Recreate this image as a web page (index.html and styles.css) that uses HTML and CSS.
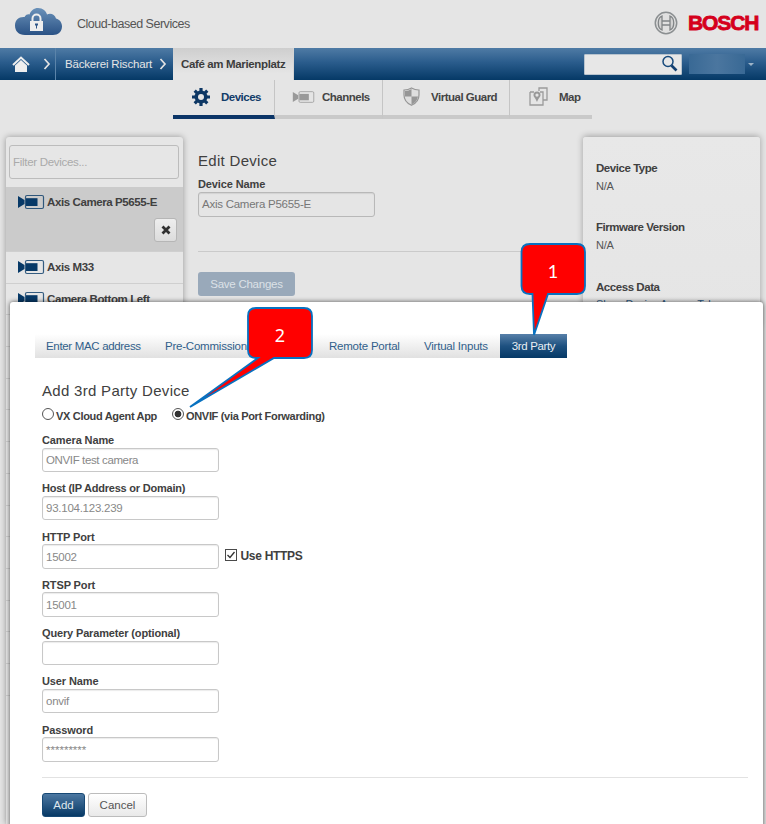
FILE: index.html
```html
<!DOCTYPE html>
<html lang="en">
<head>
<meta charset="utf-8">
<title>Cloud-based Services</title>
<link rel="stylesheet" href="styles.css">
</head>
<body>
<svg class="defs" width="0" height="0">
  <defs>
    <linearGradient id="cloud" x1="0" y1="0" x2="0" y2="1"><stop offset="0" stop-color="#6a91b9"/><stop offset="1" stop-color="#2a5285"/></linearGradient>
    <symbol id="camera" viewBox="0 0 28 16"><path d="M1 2l6.500 4v4L1 14z" fill="currentColor"/><rect x="8.500" y="1.500" width="18" height="13" rx="1.500" fill="none" stroke="currentColor" stroke-opacity=".8" stroke-width="1.200"/><rect x="9" y="4.200" width="11.500" height="7.800" fill="currentColor"/></symbol>
  </defs>
</svg>
<header class="top">
  <svg class="cloud" width="49" height="30" viewBox="0 0 49 30">
    <path d="M11 28C4.500 28 1 24 1 18.500C1 13 5 9.500 10.500 10C12 7.500 14 7 15.500 7.500C17 3.500 20 1 24 1C29 1 32 4 33 7.500C36 5.500 41 7 42 11.500C46 12.500 48 16 48 19.500C48 24.500 44 28 39 28Z" fill="url(#cloud)"/>
    <path d="M18.500 15v-3.500a4 4 0 0 1 8 0V15" fill="none" stroke="#eee" stroke-width="2"/><rect x="16" y="14" width="13" height="10" fill="#eee"/><path d="M21 16.500h3v2h-1v3h-1v-3h-1z" fill="#2f5688"/>
  </svg>
  <span class="product">Cloud-based Services</span>
  <svg class="armature" width="24" height="24" viewBox="0 0 24 24"><circle cx="12" cy="12" r="10.700" fill="#e0e0e0" stroke="#8b8f91" stroke-width="1.500"/><path d="M8 5v14C3 17 3 7 8 5zM16 5v14c5-2 5-12 0-14z" fill="#d2d2d2" stroke="#808486" stroke-width="1.300"/><path d="M8 10h8M8 14h8" stroke="#808486" stroke-width="1.400"/></svg>
  <span class="brand">BOSCH</span>
</header>
<nav class="crumbs">
  <div class="crumb home"><svg width="18" height="18" viewBox="0 0 18 18"><path d="M1 10L9 2.500 17 10" fill="none" stroke="#eee" stroke-width="2"/><path d="M3 10.500L9 5l6 5.500V17H3z" fill="#eee"/></svg><svg width="8" height="12" viewBox="0 0 8 12"><path d="M1.500 1L6 6l-4.500 5" fill="none" stroke="#e4e4e4" stroke-width="1.700"/></svg></div>
  <div class="crumb parent"><span>Bäckerei Rischart</span><svg width="8" height="12" viewBox="0 0 8 12"><path d="M1.500 1L6 6l-4.500 5" fill="none" stroke="#e4e4e4" stroke-width="1.700"/></svg></div>
  <div class="crumb current">Café am Marienplatz</div>
  <div class="search"><svg width="18" height="18" viewBox="0 0 18 18"><circle cx="7" cy="6.500" r="5" fill="none" stroke="#174a7c" stroke-width="1.500"/><path d="M10.500 10.500l5 5" stroke="#123f70" stroke-width="2.700"/></svg></div>
  <div class="account"></div><span class="caret"></span>
</nav>
<nav class="sections">
  <a class="sec active devices"><svg width="20" height="20" viewBox="0 0 20 20"><g stroke="#0d3764" stroke-width="3.200"><path d="M10 1v18M1 10h18M3.700 3.700l12.600 12.600M16.300 3.700L3.700 16.300"/></g><circle cx="10" cy="10" r="6.500" fill="#0d3764"/><circle cx="10" cy="10" r="3" fill="#e5e5e5"/></svg><span>Devices</span></a>
  <a class="sec channels"><svg width="23" height="14"><use href="#camera"/></svg><span>Channels</span></a>
  <a class="sec guard"><svg width="17" height="19" viewBox="0 0 17 19"><path d="M8.500 1C6 2.500 4 3 1 3v5c0 5 3.500 8.500 7.500 10.300C12.500 16.500 16 13 16 8V3c-3 0-5-.5-7.500-2z" fill="#dedede" stroke="#969696" stroke-width="1.200"/><path d="M8.500 2v7.500H2V4c3 0 4.500-.8 6.500-2zM8.500 9.500H15c-.6 4-3.200 6.500-6.500 8z" fill="#969696"/></svg><span>Virtual Guard</span></a>
  <a class="sec map"><svg width="19" height="19" viewBox="0 0 19 19"><path d="M10 4V1h8v12h-4M1 5h4m6 0h3v13H1V5" fill="none" stroke="#9b9b9b" stroke-width="1.300"/><path d="M8 4.500a3.500 3.500 0 0 1 3.500 3.500c0 2-2 3-3.500 7-1.500-4-3.500-5-3.500-7A3.500 3.500 0 0 1 8 4.500zm0 2a1.600 1.600 0 1 0 0 3.200 1.600 1.600 0 0 0 0-3.200z" fill="#999" fill-rule="evenodd"/></svg><span>Map</span></a>
</nav>
<main class="work">
  <aside class="list">
    <div class="filter">Filter Devices...</div>
    <div class="row selected"><svg width="28" height="16"><use href="#camera"/></svg><span>Axis Camera P5655-E</span><button class="remove"><svg width="10" height="10" viewBox="0 0 10 10"><path d="M1.500 1.500l7 7M8.500 1.500l-7 7" stroke="#303030" stroke-width="2.800"/></svg></button></div>
    <div class="row r2"><svg width="28" height="16"><use href="#camera"/></svg><span>Axis M33</span></div>
    <div class="row r3"><svg width="28" height="16"><use href="#camera"/></svg><span>Camera Bottom Left</span></div>
    <div class="row"></div><div class="row"></div><div class="row"></div><div class="row"></div><div class="row"></div><div class="row"></div><div class="row"></div><div class="row"></div><div class="row"></div><div class="row"></div><div class="row"></div><div class="row"></div>
  </aside>
  <section class="editor">
    <h2>Edit Device</h2>
    <label>Device Name</label>
    <div class="input name">Axis Camera P5655-E</div>
    <hr>
    <button class="save">Save Changes</button>
  </section>
  <aside class="info">
    <dl><dt class="i1">Device Type</dt><dd>N/A</dd><dt class="i2">Firmware Version</dt><dd>N/A</dd><dt class="i3">Access Data</dt><dd class="link">Show Device Access Token</dd></dl>
  </aside>
</main>
<div class="modal">
  <nav class="tabs"><a class="t1">Enter MAC address</a><a class="t2">Pre-Commissioning</a><a class="t3">Remote Portal</a><a class="t4">Virtual Inputs</a><a class="on">3rd Party</a></nav>
  <form>
    <h2>Add 3rd Party Device</h2>
    <div class="radios"><i class="radio"></i><span class="app">VX Cloud Agent App</span><i class="radio checked"></i><span class="onvif">ONVIF (via Port Forwarding)</span></div>
    <div class="field"><label class="l1">Camera Name</label><div class="input v1">ONVIF test camera</div></div>
    <div class="field"><label class="l2">Host (IP Address or Domain)</label><div class="input v2">93.104.123.239</div></div>
    <div class="field"><label>HTTP Port</label><div class="line"><div class="input">15002</div><svg width="12" height="12" viewBox="0 0 12 12"><rect x=".5" y=".5" width="11" height="11" fill="#fff" stroke="#4a4a4a"/><path d="M2.500 6l2.500 2.500 4.500-5.500" fill="none" stroke="#333" stroke-width="1.300"/></svg><span class="https">Use HTTPS</span></div></div>
    <div class="field"><label>RTSP Port</label><div class="input">15001</div></div>
    <div class="field"><label class="l5">Query Parameter (optional)</label><div class="input"></div></div>
    <div class="field"><label>User Name</label><div class="input">onvif</div></div>
    <div class="field"><label class="l7">Password</label><div class="input stars">*********</div></div>
    <hr>
    <div class="actions"><button type="button" class="add">Add</button><button type="button" class="cancel">Cancel</button></div>
  </form>
</div>
<svg class="callouts" width="766" height="824" viewBox="0 0 766 824">
  <g fill="#f00" stroke="#0871c0" stroke-width="1.800" stroke-linejoin="miter">
    <path d="M530 244H577Q585 244 585 252V286Q585 294 577 294H548L534 335L532.500 294H530Q521.500 294 521.500 286V252Q521.500 244 530 244Z"/>
    <path d="M256 308H304Q312 308 312 316V350Q312 358 304 358H274L190 407L258 358H256Q248 358 248 350V316Q248 308 256 308Z"/>
  </g>
  <text class="num one" x="553" y="277.500" text-anchor="middle">1</text>
  <text class="num" x="280" y="342" text-anchor="middle">2</text>
</svg>
</body>
</html>
```
FILE: styles.css
```css
* { box-sizing: border-box; }
body { margin: 0; width: 766px; height: 824px; position: relative; overflow: hidden; background: #e5e5e5; font: 12px/16px "Liberation Sans", Arial, sans-serif; color: #404040; }
.defs, .callouts, .modal { position: absolute; }
svg { display: block; flex: none; }
button { font: inherit; padding: 0; }
h2 { margin: 0; font-size: 15px; font-weight: normal; line-height: 18px; letter-spacing: .3px; }
label { display: block; font-weight: bold; font-size: 11px; line-height: 14px; letter-spacing: -.120px; white-space: nowrap; }
hr { border: 0; margin: 0; }
.top { height: 48px; display: flex; align-items: center; padding: 0 8px 0 14px; }
.cloud { margin-bottom: 4px; }
.product { margin-left: 14px; font-size: 12.500px; letter-spacing: -.480px; color: #555; flex: 1; }
.armature { margin: 0 10px 2px 0; }
.brand { font: bold 21px/24px "Liberation Sans", Arial, sans-serif; color: #d5001c; -webkit-text-stroke: .8px #d5001c; width: 70px; letter-spacing: -1.100px; margin-bottom: 2px; }
.crumbs { height: 32px; display: flex; align-items: center; background: linear-gradient(#4f7ba5, #2a5c8c 45%, #053966); color: #e5e5e5; }
.crumb { height: 32px; display: flex; align-items: center; white-space: nowrap; }
.home { width: 56px; padding-left: 12px; gap: 13px; border-right: 1px solid #5b84aa; }
.parent { width: 117px; padding-left: 9px; gap: 6px; }
.parent span { width: 88px; font-size: 11.500px; letter-spacing: -.180px; }
.current { width: 121px; padding-left: 8px; background: linear-gradient(#cecece, #e5e5e5 80%); border-right: 1px solid #d4d4d4; color: #3d3d3d; font-weight: bold; font-size: 11.500px; letter-spacing: -.360px; }
.search { margin-left: 290px; width: 98px; height: 21px; background: #e7e7e7; border: 1px solid #b7c3ce; border-radius: 1px; display: flex; justify-content: flex-end; align-items: center; padding-right: 2px; }
.account { margin-left: 7px; width: 56px; height: 20px; background: linear-gradient(90deg, #396995, #4b769f 50%, #396995); }
.caret { margin-left: 3px; border: 3px solid transparent; border-top-color: #9db4c8; border-bottom: 0; }
.sections { height: 39px; display: flex; margin-left: 173px; }
.sec { display: flex; align-items: center; height: 39px; border-bottom: 4px solid #c9c9c9; border-right: 1px solid #c5c5c5; font-weight: bold; font-size: 11.500px; color: #444; white-space: nowrap; padding-bottom: 2px; letter-spacing: -.500px; }
.devices { width: 102px; padding-left: 18px; gap: 10px; border-bottom-color: #0b3567; color: #123c69; }
.channels { width: 108px; padding-left: 17px; gap: 7px; }
.channels svg { color: #999; }
.guard { width: 127px; padding-left: 20px; gap: 11px; }
.map { width: 82px; padding-left: 19px; gap: 11px; border-right: 0; }
.work { display: flex; padding: 18px 6px 0; height: 705px; }
.list { width: 177px; height: 687px; border-radius: 3px 3px 0 0; background: #e6e6e6; box-shadow: 0 0 6px rgba(0,0,0,.35); padding-top: 8px; overflow: hidden; }
.filter { margin: 0 4px 8px 3px; height: 34px; border: 1px solid #bcbcbc; border-radius: 3px; padding: 8px 3px; font-size: 11.500px; letter-spacing: -.300px; color: #aaa; }
.row { height: 31.700px; border-bottom: 1px solid #cfcfcf; display: flex; align-items: flex-start; padding: 7px 0 0 11px; gap: 2px; font-size: 11.500px; letter-spacing: -.400px; font-weight: bold; position: relative; white-space: nowrap; }
.row > svg { color: #073967; }
.selected { height: 65px; background: #cbcbcb; }
.remove { position: absolute; right: 6px; bottom: 9px; width: 23px; height: 24px; border: 1px solid #b6b6b6; border-radius: 3px; background: linear-gradient(#eee, #dcdcdc); display: grid; place-items: center; }
.editor { width: 354px; margin-left: 15px; padding-top: 15px; }
.editor label { margin-top: 7px; }
.input { width: 176.500px; height: 24.500px; border: 1px solid #c8c8c8; border-radius: 3px; padding: 4px 3px 0; line-height: 15px; font-size: 11.500px; letter-spacing: -.250px; color: #888; background: #fff; box-shadow: inset 0 1px 1px rgba(0,0,0,.08); white-space: nowrap; }
.editor .input { margin-top: 1px; background: #e5e5e5; border-color: #b8b8b8; color: #777; }
.v1 { letter-spacing: -.370px; }
.stars { letter-spacing: 0; }
.editor hr { margin-top: 34px; height: 1px; background: #cacaca; }
.save { margin-top: 20px; width: 97px; height: 24px; background: #99a9ba; color: #dce1e7; border: 0; border-radius: 3px; font-size: 11.500px; letter-spacing: -.250px; display: block; }
.info { margin-left: 31px; width: 177px; height: 190px; padding: 18px 13px; border-radius: 3px 3px 0 0; background: linear-gradient(#e8e8e8, #e5e5e5); box-shadow: 0 -1px 6px rgba(0,0,0,.3); }
dl { margin: 0; white-space: nowrap; }
dt { font-weight: bold; font-size: 11.500px; letter-spacing: -.450px; line-height: 18px; margin-top: 23px; }
dt.i1 { margin-top: 4px; }
dt.i3 { margin-top: 24px; }
dd { margin: 0; font-size: 11px; letter-spacing: -.200px; line-height: 18px; color: #555; }
.link { color: #315d86; line-height: 16px; }
.modal { left: 10px; top: 302px; width: 753px; height: 540px; background: #fff; border-radius: 3px; box-shadow: 0 0 5px rgba(0,0,0,.65); padding: 32px 15px 0 25px; }
.tabs { display: flex; width: 532px; height: 24px; background: linear-gradient(#fff, #e1e1e1); font-size: 11.500px; letter-spacing: -.220px; line-height: 24px; color: #315f8b; white-space: nowrap; }
.tabs a { padding-left: 11px; }
.tabs .t1 { width: 119px; letter-spacing: -.330px; }
.t2 { width: 164px; } .t3 { width: 95px; } .t4 { width: 87px; }
.tabs .on { width: 67px; background: linear-gradient(#5780a9, #1e5180 50%, #053966); color: #e9eef3; padding: 0; text-align: center; letter-spacing: -.370px; }
form { padding: 24px 0 0 7px; }
.radios { display: flex; align-items: center; margin: 8px 0 11px; height: 14px; font-weight: bold; font-size: 11px; letter-spacing: -.320px; white-space: nowrap; }
.radio { width: 12px; height: 12px; border: 1px solid #555; border-radius: 50%; background: #fff; flex: none; margin-bottom: 3px; }
.checked { margin-left: 16px; background: radial-gradient(circle, #333 3px, #fff 3.700px); }
.radios span { margin-left: 2px; padding-top: 1px; }
.app { width: 100px; }
.field { height: 48.250px; }
.field > label { padding-bottom: .5px; height: 14.500px; }
.field .input { padding-top: 4.500px; }
label.l2 { letter-spacing: -.220px; }
label.l5 { letter-spacing: -.150px; }
.line { display: flex; align-items: center; }
.line svg { margin: 0 4px 3px 6px; }
.https { font-weight: bold; letter-spacing: -.300px; }
form hr { margin-top: 6px; height: 1px; background: #e2e2e2; }
.actions { display: flex; gap: 3px; margin-top: 15.500px; }
.add { width: 43px; height: 24px; border: 1px solid #174975; border-radius: 3px; background: linear-gradient(#4c78a2, #073965); color: #dfe7ee; font-size: 11.500px; }
.cancel { width: 59px; height: 24px; border: 1px solid #bcbcbc; border-radius: 3px; background: linear-gradient(#fff, #e9e9e9); color: #555; font-size: 11.500px; }
.callouts { left: 0; top: 0; pointer-events: none; }
.num { font: 18px "Noto Sans", sans-serif; fill: #fff; }
.one { font: 18px Lato, sans-serif; }
```
